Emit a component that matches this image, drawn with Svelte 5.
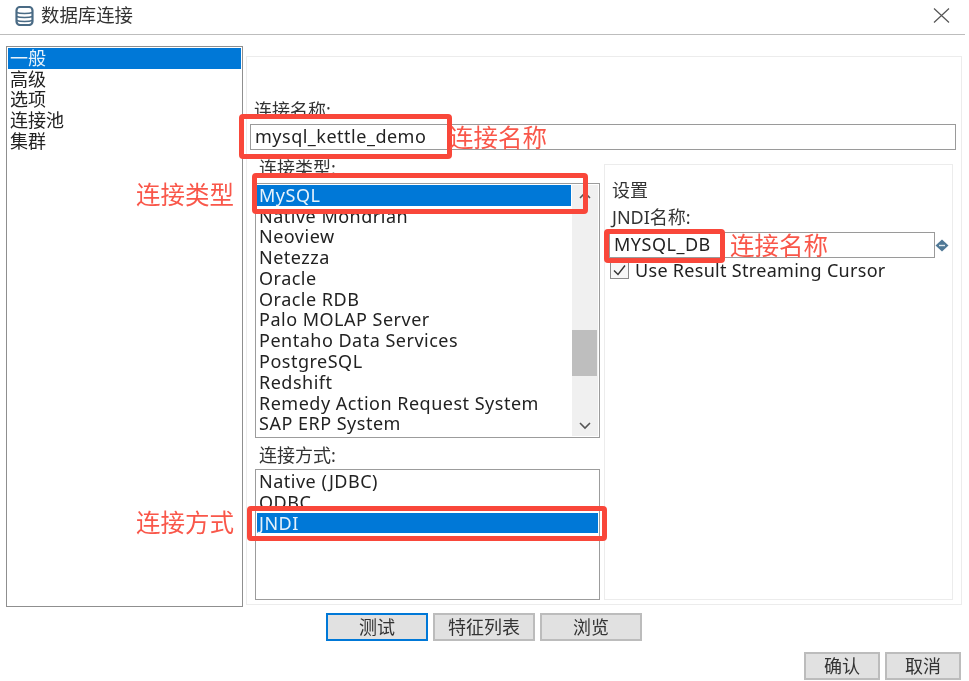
<script>
  const sections = ['一般', '高级', '选项', '连接池', '集群'];
  const types = ['Native Mondrian', 'Neoview', 'Netezza', 'Oracle', 'Oracle RDB', 'Palo MOLAP Server', 'Pentaho Data Services', 'PostgreSQL', 'Redshift', 'Remedy Action Request System', 'SAP ERP System'];
  const methods = ['Native (JDBC)', 'ODBC'];
</script>

<div class="app">
  <header class="title">
    <svg class="db" width="19" height="20" viewBox="0 0 19 20" fill="none" stroke="#4a6b85" stroke-width="2.2">
      <rect x="1.5" y="1" width="16" height="18" rx="3.5" />
      <path d="M1.5 6.5c3.5 1.4 12.5 1.4 16 0M1.5 10.5c3.5 1.4 12.5 1.4 16 0M1.5 14.5c3.5 1.4 12.5 1.4 16 0" stroke-width="1.6" />
    </svg>
    <span class="title-text">数据库连接</span>
    <svg class="close" width="17" height="15" viewBox="0 0 17 15" fill="none" stroke="#555" stroke-width="1.2">
      <path d="M1 .5l15 14M16 .5l-15 14" />
    </svg>
  </header>

  <div class="body">
    <ul class="sections">
      {#each sections as s, i}
        <li class:sel={i === 0}>{s}</li>
      {/each}
    </ul>

    <section class="main">
      <label class="lbl name-lbl" for="cn">连接名称:</label>
      <input id="cn" class="field name-field" value="mysql_kettle_demo" readonly />

      <div class="cols">
        <div class="left">
          <div class="lbl">连接类型:</div>
          <div class="list types">
            <div class="rows">
              <div class="row sel">MySQL</div>
              {#each types as t}<div class="row">{t}</div>{/each}
            </div>
            <div class="scroll">
              <svg width="14" height="9" viewBox="0 0 14 9" fill="none" stroke="#555" stroke-width="1.6"><path d="M2 7l5-5 5 5" /></svg>
              <div class="thumb"></div>
              <svg class="down" width="14" height="9" viewBox="0 0 14 9" fill="none" stroke="#555" stroke-width="1.6"><path d="M2 2l5 5 5-5" /></svg>
            </div>
          </div>
          <div class="lbl method-lbl">连接方式:</div>
          <div class="list methods">
            {#each methods as m}<div class="row">{m}</div>{/each}
            <div class="row sel">JNDI</div>
          </div>
        </div>

        <div class="settings">
          <div class="set-title">设置</div>
          <label class="lbl jndi-lbl" for="jn">JNDI名称:</label>
          <div class="jndi-line">
            <input id="jn" class="field jndi-field" value="MYSQL_DB" readonly />
            <svg width="14" height="13" viewBox="0 0 14 13"><path d="M7 0.5L13.5 6.5 7 12.5 0.5 6.5z" fill="#4f7896" /><path d="M4 6.5h6" stroke="#dfe8ee" stroke-width="1.4" /></svg>
          </div>
          <div class="check">
            <span class="box"><svg width="15" height="13" viewBox="0 0 15 13" fill="none" stroke="#333" stroke-width="1.4"><path d="M2 6.5l4 4 7-9" /></svg></span>
            <span>Use Result Streaming Cursor</span>
          </div>
        </div>
      </div>
    </section>
  </div>

  <div class="actions">
    <button class="focus">测试</button>
    <button>特征列表</button>
    <button>浏览</button>
  </div>
  <div class="footer">
    <button>确认</button>
    <button>取消</button>
  </div>

  <div class="mark m1"></div>
  <div class="mark m2"></div>
  <div class="mark m3"></div>
  <div class="mark m4"></div>
  <span class="note n1">连接名称</span>
  <span class="note n2">连接类型</span>
  <span class="note n3">连接方式</span>
  <span class="note n4">连接名称</span>
</div>

<style>
  :global(body) { margin: 0; background: #fff; }
  .app {
    position: relative;
    width: 969px;
    height: 681px;
    overflow: hidden;
    background: #fff;
    color: #222;
    font: 18px/20.8px "Noto Sans", "Noto Sans CJK SC", sans-serif;
    letter-spacing: 0.5px;
    filter: blur(0.35px);
  }
  .title {
    display: flex;
    align-items: center;
    height: 35px;
    width: 965px;
    padding: 0 0 3px 15px;
    box-sizing: border-box;
    border-bottom: 1px solid #bdbdbd;
  }
  .title-text { margin-left: 7px; color: #333; letter-spacing: 0; font-size: 18.4px; }
  .close { margin-left: auto; margin-right: 15px; }
  .body { display: flex; align-items: flex-start; padding: 11px 0 0 6px; }
  .sections {
    list-style: none;
    margin: 0;
    padding: 1px;
    box-sizing: border-box;
    width: 237px;
    height: 561px;
    border: 1px solid #8f8f8f;
    letter-spacing: 0;
  }
  .sections li { height: 20.7px; padding-left: 2px; line-height: 21.6px; }
  .sections li.sel { background: #0078d7; color: #e8f3fb; }
  .main {
    box-sizing: border-box;
    width: 716px;
    height: 549px;
    margin: 10px 0 0 3px;
    border: 1px solid #ececec;
    padding: 43px 4px 0 3px;
  }
  .lbl { display: block; line-height: 20px; color: #333; letter-spacing: 0; }
  .name-lbl { margin-left: 4px; }
  .field {
    display: block;
    box-sizing: border-box;
    height: 26px;
    border: 1px solid #9a9a9a;
    padding: 0 4px 2px;
    font: inherit;
    letter-spacing: inherit;
    color: #222;
    background: #fff;
    outline: none;
  }
  .name-field { width: 706px; margin-top: 4px; }
  .cols { display: flex; align-items: flex-start; margin-top: 8px; margin-left: 5px; }
  .left { width: 345px; }
  .left > .lbl { margin-left: 4px; }
  .list { box-sizing: border-box; border: 1px solid #9c9c9c; background: #fff; }
  .types { display: flex; height: 255px; margin-top: 5px; padding: 1px; }
  .rows { flex: 1; overflow: hidden; }
  .row { height: 20.8px; padding-left: 2px; line-height: 20.8px; white-space: nowrap; }
  .row.sel { background: #0078d7; color: #e6f2fb; }
  .types .row.sel { height: 20.5px; }
  .scroll {
    position: relative;
    width: 26px;
    margin-left: 1px;
    background: #f0f0f0;
  }
  .scroll svg { position: absolute; left: 6px; top: 6px; }
  .scroll .down { top: auto; bottom: 6px; }
  .thumb { position: absolute; left: 0; right: 1px; top: 145px; height: 46px; background: #bebebe; }
  .method-lbl { margin-top: 7px; }
  .methods { height: 131px; margin-top: 4px; padding: 1px; }
  .settings {
    box-sizing: border-box;
    width: 349px;
    height: 436px;
    margin: 6px 0 0 4px;
    border: 1px solid #ececec;
    padding: 15px 0 0 4px;
  }
  .set-title { margin-left: 3px; line-height: 20px; color: #333; letter-spacing: 0; }
  .jndi-lbl { margin: 7px 0 0 3px; }
  .jndi-line { display: flex; align-items: center; margin-top: 5px; }
  .jndi-field { width: 326px; }
  .check { display: flex; align-items: center; gap: 6px; margin: 2px 0 0 1px; line-height: 20px; letter-spacing: 0.3px; }
  .box {
    display: flex;
    align-items: center;
    justify-content: center;
    box-sizing: border-box;
    width: 19px;
    height: 18px;
    border: 1px solid #8a8a8a;
    background: #f7f7f7;
  }
  button {
    box-sizing: border-box;
    height: 28px;
    border: 2px solid #bcbcbc;
    background: #e1e1e1;
    padding: 0;
    font: inherit;
    letter-spacing: 0;
    color: #333;
  }
  .actions { display: flex; gap: 5px; margin: 6px 0 0 326px; }
  .actions button { width: 102px; }
  .actions .focus { border-color: #0078d7; }
  .footer { display: flex; justify-content: flex-end; gap: 5px; margin: 11px 8px 0 0; }
  .footer button { width: 76px; }
  .mark {
    position: absolute;
    box-sizing: border-box;
    border: 5px solid #f9473a;
    border-radius: 4px;
  }
  .m1 { left: 239px; top: 114px; width: 213px; height: 45px; }
  .m2 { left: 252px; top: 173px; width: 336px; height: 41px; }
  .m3 { left: 604px; top: 229px; width: 121px; height: 34px; }
  .m4 { left: 247px; top: 506px; width: 360px; height: 35px; }
  .note {
    position: absolute;
    font-size: 24.5px;
    line-height: 28px;
    letter-spacing: 0;
    color: #f9574a;
    white-space: nowrap;
  }
  .n1 { left: 449px; top: 124px; }
  .n2 { left: 136px; top: 181px; }
  .n3 { left: 136px; top: 509px; }
  .n4 { left: 730px; top: 232px; }
</style>
